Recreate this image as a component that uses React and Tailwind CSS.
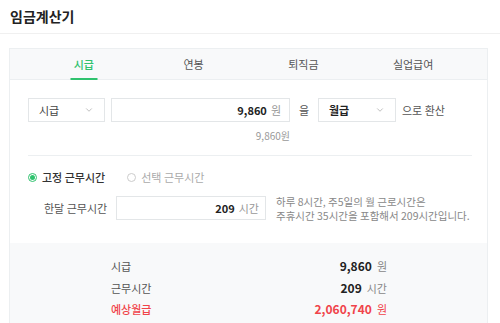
import { ChevronDown } from "lucide-react";

const font = { fontFamily: '"Noto Sans CJK KR", "Noto Sans", sans-serif' };

function Select({ value, width, strong }) {
  return (
    <div className={`${width} h-[24px] border border-[#e3e6e8] bg-white flex items-center justify-between pl-[10px] pr-[10px]`}>
      <span className={`text-[11px] ${strong ? "font-bold text-[#222]" : "text-[#444]"}`}>{value}</span>
      <ChevronDown size={10} color="#999" strokeWidth={1.5} />
    </div>
  );
}

export default function App() {
  const tabs = ["시급", "연봉", "퇴직금", "실업급여"];
  const results = [
    { label: "시급", value: "9,860", unit: "원" },
    { label: "근무시간", value: "209", unit: "시간" },
    { label: "예상월급", value: "2,060,740", unit: "원", red: true },
  ];

  return (
    <div className="w-[500px] h-[323px] overflow-hidden bg-white text-[#333]" style={font}>
      <div className="h-[34px] flex items-center px-[10px] border-b border-[#f0f0f0]">
        <h1 className="text-[14px] font-bold text-[#222]">임금계산기</h1>
      </div>

      <div className="pt-[14px] pl-[9px] pr-[12px]">
        <div className="border border-[#eceff1] h-[300px] flex flex-col">
          <div className="h-[31px] bg-[#f8f9fa] border-b border-[#eceff1] px-[19px] grid grid-cols-4">
            {tabs.map((t, i) => (
              <div key={t} className="relative flex items-center justify-center">
                <span className={`text-[11px] ${i === 0 ? "text-[#2fc26e] font-medium" : "text-[#555]"}`}>{t}</span>
                {i === 0 && <div className="absolute bottom-[-1px] left-1/2 -translate-x-1/2 w-[27px] h-[2px] bg-[#2fc26e]" />}
              </div>
            ))}
          </div>

          <div className="pt-[18px] pl-[18px] pr-[15px]">
            <div className="flex items-center">
              <Select value="시급" width="w-[77px]" />
              <div className="ml-[6px] w-[179px] h-[24px] border border-[#e3e6e8] flex items-center justify-end pr-[8px] gap-[4px]">
                <span className="text-[11px] font-bold text-[#222]">9,860</span>
                <span className="text-[11px] text-[#999]">원</span>
              </div>
              <span className="w-[28px] text-center text-[11px] text-[#555]">을</span>
              <Select value="월급" width="w-[78px]" strong />
              <span className="ml-[6px] text-[11px] text-[#555]">으로 환산</span>
            </div>
            <div className="w-[262px] flex justify-end pt-[6px]">
              <span className="text-[10px] text-[#999]">9,860원</span>
            </div>
            <div className="mt-[12px] border-t border-[#eceff1]" />

            <div className="flex items-center pt-[13px]">
              <span className="w-[9px] h-[9px] rounded-full border border-[#2fc26e] flex items-center justify-center">
                <span className="w-[5px] h-[5px] rounded-full bg-[#2fc26e]" />
              </span>
              <span className="ml-[5px] text-[11px] font-medium text-[#333]">고정 근무시간</span>
              <span className="ml-[22px] w-[9px] h-[9px] rounded-full border border-[#ccc]" />
              <span className="ml-[5px] text-[11px] text-[#aaa]">선택 근무시간</span>
            </div>

            <div className="flex items-center pt-[9px]">
              <span className="pl-[16px] w-[88px] text-[11px] text-[#555]">한달 근무시간</span>
              <div className="w-[150px] h-[24px] border border-[#e3e6e8] flex items-center justify-end pr-[6px] gap-[4px]">
                <span className="text-[11px] font-bold text-[#222]">209</span>
                <span className="text-[11px] text-[#999]">시간</span>
              </div>
              <div className="ml-[10px] flex flex-col gap-[1px] text-[10.5px] leading-[13px] text-[#888]">
                <span>하루 8시간, 주5일의 월 근로시간은</span>
                <span>주휴시간 35시간을 포함해서 209시간입니다.</span>
              </div>
            </div>
          </div>

          <div className="mt-[21px] flex-1 bg-[#f8f9fa] pt-[13px] pl-[101px]">
            {results.map((r) => (
              <div key={r.label} className="flex items-center h-[21.5px] w-[276px]">
                <span className={`flex-1 text-[11px] ${r.red ? "text-[#f0444a] font-medium" : "text-[#555]"}`}>{r.label}</span>
                <span className={`text-[12px] font-bold ${r.red ? "text-[#f0444a]" : "text-[#222]"}`}>{r.value}</span>
                <span className={`ml-[5px] text-[11px] ${r.red ? "text-[#f0444a]" : "text-[#888]"}`}>{r.unit}</span>
              </div>
            ))}
          </div>
        </div>
      </div>
    </div>
  );
}
